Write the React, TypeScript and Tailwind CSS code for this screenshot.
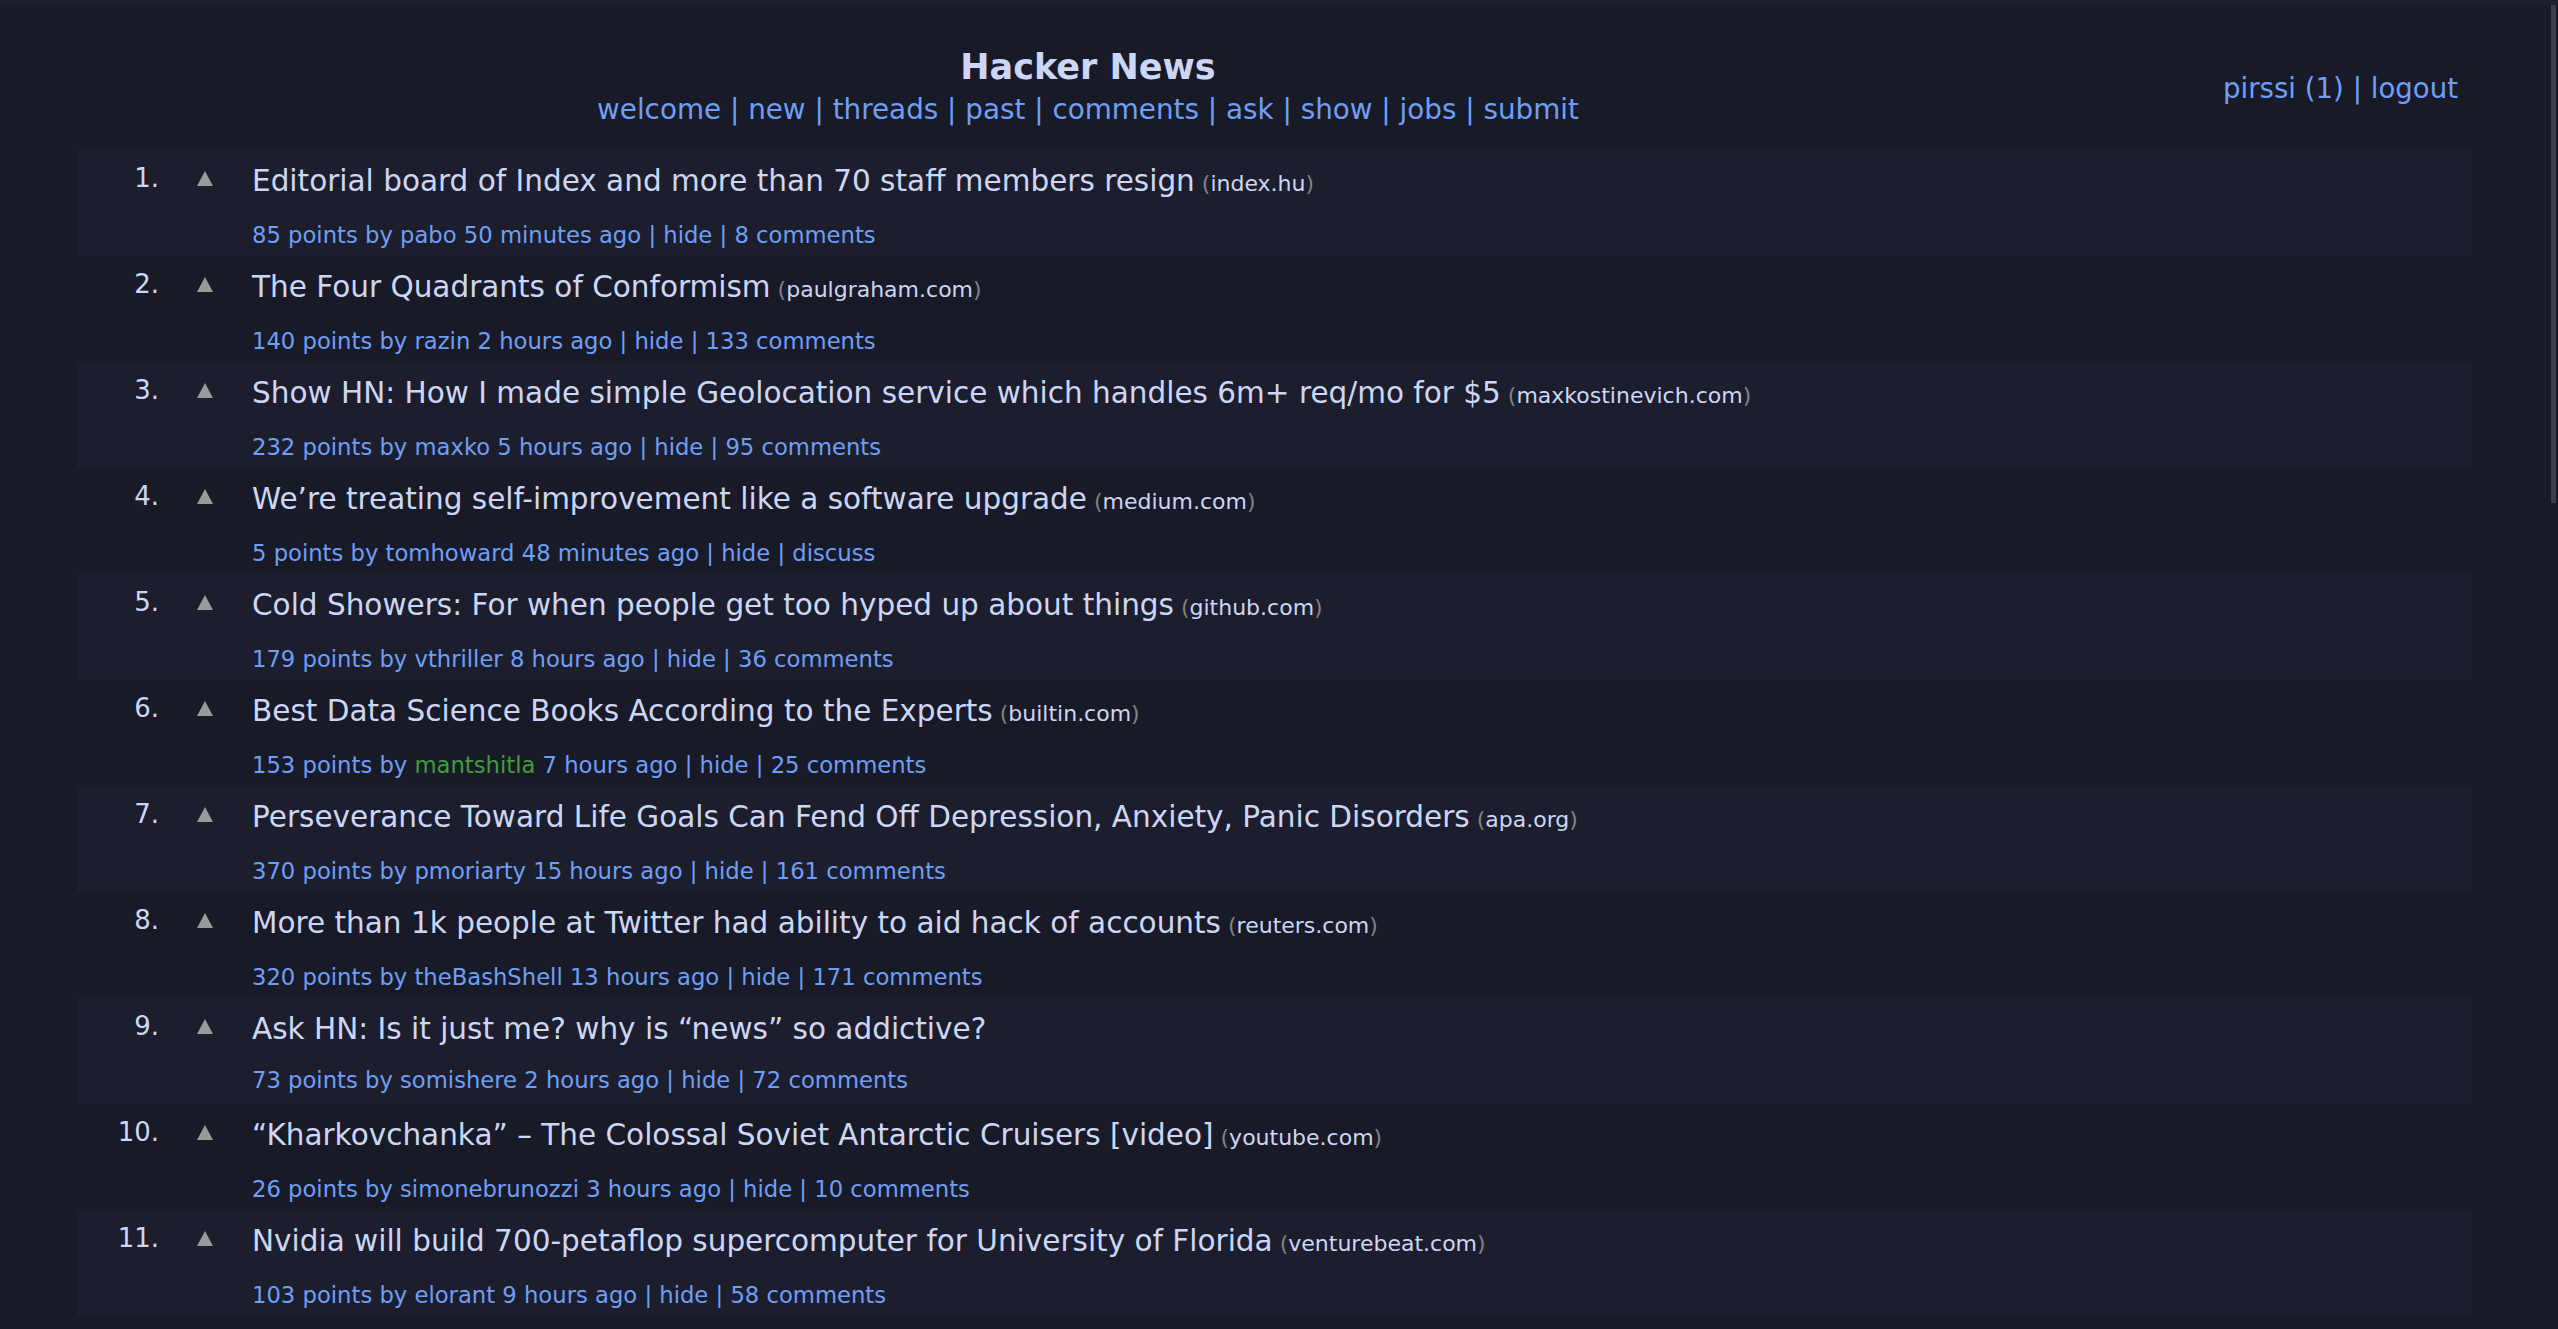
import React from 'react';

type Story = {
  title: string;
  domain?: string;
  points: number;
  user: string;
  newUser?: boolean;
  age: string;
  comments: string;
};

const STORIES: Story[] = [
  { title: 'Editorial board of Index and more than 70 staff members resign', domain: 'index.hu', points: 85, user: 'pabo', age: '50 minutes ago', comments: '8 comments' },
  { title: 'The Four Quadrants of Conformism', domain: 'paulgraham.com', points: 140, user: 'razin', age: '2 hours ago', comments: '133 comments' },
  { title: 'Show HN: How I made simple Geolocation service which handles 6m+ req/mo for $5', domain: 'maxkostinevich.com', points: 232, user: 'maxko', age: '5 hours ago', comments: '95 comments' },
  { title: 'We\u2019re treating self-improvement like a software upgrade', domain: 'medium.com', points: 5, user: 'tomhoward', age: '48 minutes ago', comments: 'discuss' },
  { title: 'Cold Showers: For when people get too hyped up about things', domain: 'github.com', points: 179, user: 'vthriller', age: '8 hours ago', comments: '36 comments' },
  { title: 'Best Data Science Books According to the Experts', domain: 'builtin.com', points: 153, user: 'mantshitla', newUser: true, age: '7 hours ago', comments: '25 comments' },
  { title: 'Perseverance Toward Life Goals Can Fend Off Depression, Anxiety, Panic Disorders', domain: 'apa.org', points: 370, user: 'pmoriarty', age: '15 hours ago', comments: '161 comments' },
  { title: 'More than 1k people at Twitter had ability to aid hack of accounts', domain: 'reuters.com', points: 320, user: 'theBashShell', age: '13 hours ago', comments: '171 comments' },
  { title: 'Ask HN: Is it just me? why is \u201cnews\u201d so addictive?', points: 73, user: 'somishere', age: '2 hours ago', comments: '72 comments' },
  { title: '\u201cKharkovchanka\u201d \u2013 The Colossal Soviet Antarctic Cruisers [video]', domain: 'youtube.com', points: 26, user: 'simonebrunozzi', age: '3 hours ago', comments: '10 comments' },
  { title: 'Nvidia will build 700-petaflop supercomputer for University of Florida', domain: 'venturebeat.com', points: 103, user: 'elorant', age: '9 hours ago', comments: '58 comments' },
];

const NAV = ['welcome', 'new', 'threads', 'past', 'comments', 'ask', 'show', 'jobs', 'submit'];

function Sep() {
  return <span>{' | '}</span>;
}

export default function App() {
  return (
    <main className="relative min-h-screen bg-[#191a27] text-[#cdd6f4] font-['DejaVu_Sans',Verdana,sans-serif] border-t-[5px] border-[#1e1f2e] overflow-hidden">
      {/* fake scrollbar thumb */}
      <div className="absolute right-[2px] top-0 h-[498px] w-[5px] bg-[#3a3c50]" />

      <div className="ml-[77px] mr-[86px]">
        {/* Header */}
        <header className="flex items-start h-[145px]">
          <div className="flex-1 flex flex-col items-center pt-[42px]">
            <h1 className="text-[35px] leading-[40px] font-bold text-[#cdd6f4]">Hacker News</h1>
            <nav className="mt-[6px] text-[27.8px] leading-[34px] text-[#6f9ff5] whitespace-pre">
              {NAV.map((n, i) => (
                <React.Fragment key={n}>
                  {i > 0 && <Sep />}
                  <a href="#">{n}</a>
                </React.Fragment>
              ))}
            </nav>
          </div>
          <div className="w-[373px] pt-[67px] pr-[14px] text-right text-[27.6px] leading-[34px] text-[#6f9ff5] whitespace-pre">
            <a href="#">pirssi (1)</a>
            <Sep />
            <a href="#">logout</a>
          </div>
        </header>

        {/* Stories */}
        <div className="flex flex-col">
          {STORIES.map((s, i) => (
            <div key={i} className={`flex items-start h-[106px] ${i % 2 === 0 ? 'bg-[#1c1e2d]' : ''}`}>
              <div className="w-[82px] shrink-0 pt-[11px] text-right text-[26px] leading-[34px] text-[#cdd6f4]">{i + 1}.</div>
              <div className="ml-[38px] mt-[21px] shrink-0">
                <svg width="16" height="15" viewBox="0 0 16 15">
                  <polygon points="8,0 16,15 0,15" fill="#9a9a9a" />
                </svg>
              </div>
              <div className="ml-[39px] pt-[14px] min-w-0">
                <div className="text-[29.5px] leading-[34px] whitespace-nowrap">
                  <a href="#" className="text-[#cdd6f4]">{s.title}</a>
                  {s.domain && (
                    <span className="text-[22px] text-[#828282]">
                      {' '}(<span className="text-[#cdd6f4]">{s.domain}</span>)
                    </span>
                  )}
                </div>
                <div className="mt-[20px] text-[22.7px] leading-[28px] text-[#6f9ff5] whitespace-pre">
                  {s.points} points by{' '}
                  <a href="#" className={s.newUser ? 'text-[#3e9e3a]' : ''}>{s.user}</a>{' '}
                  <a href="#">{s.age}</a>
                  <Sep />
                  <a href="#">hide</a>
                  <Sep />
                  <a href="#">{s.comments}</a>
                </div>
              </div>
            </div>
          ))}
        </div>
      </div>
    </main>
  );
}
